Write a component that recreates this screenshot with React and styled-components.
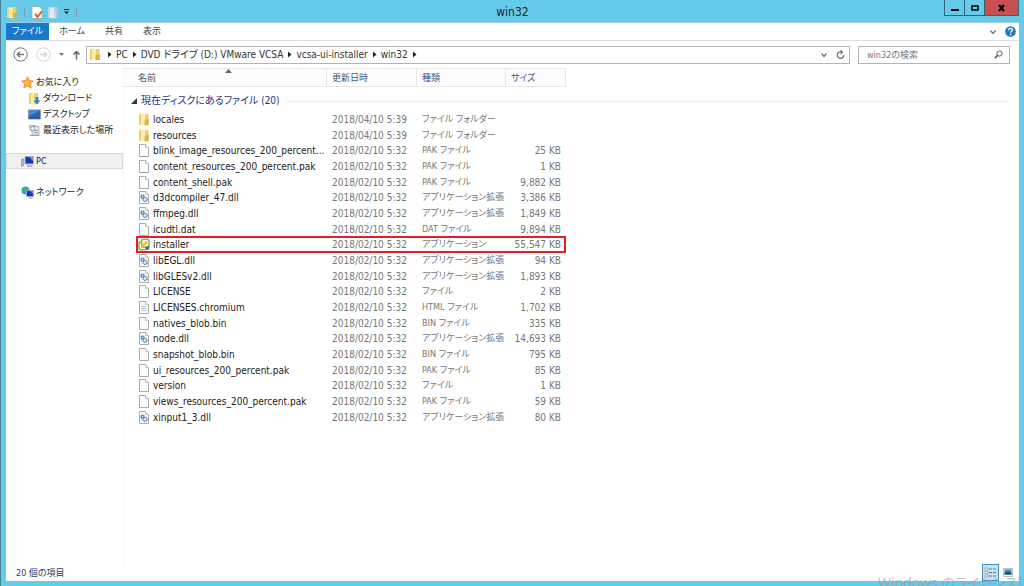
import React from "react";
import styled, { createGlobalStyle } from "styled-components";

const GlobalStyle = createGlobalStyle`
    * { box-sizing: border-box; }
    body {
        margin: 0;
        background: #66cbea;
        color: #222;
        font-family: "DejaVu Sans Condensed", "Noto Sans", "Noto Sans CJK JP", sans-serif;
        font-size: 9px;
        line-height: 16px;
        font-feature-settings: "palt";
    }
    button, input {
        font: inherit;
        font-feature-settings: inherit;
        color: inherit;
        margin: 0;
        padding: 0;
        border: 0;
        background: none;
    }
    button { display: flex; align-items: center; justify-content: center; }
    a { color: inherit; text-decoration: none; }
    svg { display: block; flex: none; }
`;

const Window = styled.div`
    height: 100vh;
    display: flex;
    flex-direction: column;
    padding: 0 5px 5px;
    border-left: 1px solid #4d7f91;
    background: #66cbea;
    overflow: hidden;
    position: relative;
`;

const TitleBar = styled.header`
    height: 22px;
    display: grid;
    grid-template-columns: 1fr auto 1fr;
    flex: none;
`;

const Title = styled.h1`
    margin: 0;
    font-size: 12px;
    font-weight: 400;
    line-height: 24px;
`;

const QuickAccess = styled.div`
    display: flex;
    align-items: center;
    gap: 4px;
`;

const Divider = styled.span`
    width: 1px;
    height: 9px;
    margin: 0 2px;
    background: #8796a0;
`;

const WindowButtons = styled.div`
    display: flex;
    justify-self: end;
    height: 16px;
`;

const WindowButton = styled.button`
    width: ${props => props.$close ? "35px" : "21px"};
    border: 1px solid #2f6478;
    border-top: 0;
    margin-left: -1px;
    background: ${props => props.$close ? "#c75050" : "none"};
`;

const Client = styled.div`
    flex: 1;
    min-height: 0;
    display: flex;
    flex-direction: column;
    background: #fff;
    border-top: 1px solid #a3cfdf;
`;

const Ribbon = styled.nav`
    height: 18px;
    display: flex;
    flex: none;
    align-items: stretch;
    border-bottom: 1px solid #dcdddf;
`;

const Tab = styled.a`
    padding: 0 ${props => props.$active ? "6px" : "10px"};
    line-height: 17px;
    color: ${props => props.$active ? "#fff" : "#444"};
    background: ${props => props.$active ? "#1979ca" : "none"};
`;

const RibbonEnd = styled.div`
    margin-left: auto;
    padding-right: 3px;
    display: flex;
    align-items: center;
    gap: 8px;
`;

const AddressBar = styled.div`
    height: 27px;
    padding: 0 9px 0 7px;
    display: flex;
    flex: none;
    align-items: center;
`;

const NavButtons = styled.div`
    width: 73px;
    display: flex;
    align-items: center;
    gap: 8px;
`;

const Path = styled.div`
    flex: 1;
    height: 18px;
    padding: 0 4px 0 2px;
    display: flex;
    align-items: center;
    gap: 4px;
    border: 1px solid #b4b4b4;
    color: #333;
    font-size: 10px;

    > svg:first-child { margin-right: 2px; }
`;

const PathEnd = styled.div`
    margin-left: auto;
    display: flex;
    gap: 8px;
`;

const Search = styled.label`
    width: 152px;
    height: 18px;
    margin-left: 8px;
    padding: 0 6px 0 8px;
    display: flex;
    align-items: center;
    border: 1px solid #b4b4b4;

    input {
        flex: 1;
        min-width: 0;
        outline: none;
    }
    input::placeholder { color: #777; opacity: 1; }
`;

const Body = styled.div`
    flex: 1;
    min-height: 0;
    display: flex;
`;

const Sidebar = styled.aside`
    width: 118px;
    padding-top: 6px;
    flex: none;
    border-right: 1px solid #f4f5f7;
`;

const SideGroup = styled.div`
    margin-bottom: 15px;
`;

const SideItem = styled.a`
    height: 16px;
    padding-left: ${props => props.$child ? "21px" : "14px"};
    display: flex;
    align-items: center;
    gap: 2px;
    white-space: nowrap;
    border: 1px solid ${props => props.$selected ? "#d9d9d9" : "transparent"};
    background: ${props => props.$selected ? "#f0f0f0" : "none"};
`;

const Main = styled.main`
    flex: 1;
    min-width: 0;
    padding-right: 6px;
`;

const FileTable = styled.table`
    width: 100%;
    table-layout: fixed;
    border-collapse: separate;
    border-spacing: 0;

    th, td { padding: 0 5px; white-space: nowrap; }
`;

const HeadCell = styled.th`
    height: 19px;
    position: relative;
    text-align: left;
    font-weight: 400;
    color: #44597a;
    background: #fcfcfc;
    border: solid #e8e8e8;
    border-width: 1px 1px 1px 0;

    &&:first-child { padding-left: 14px; }
    svg { position: absolute; top: 0; left: 50%; }
`;

const GroupCell = styled.td`
    height: 24px;

    div {
        padding-top: 4px;
        display: flex;
        align-items: center;
        gap: 4px;
        font-size: 10px;
        color: #1e3287;
    }
    && { padding-left: 7px; }
    div::after {
        content: "";
        flex: 1;
        height: 1px;
        margin-left: 2px;
        background: #e6eef7;
    }
`;

const FileRow = styled.tr`
    height: 16px;
    line-height: 15px;
    &:nth-child(3n) { height: 15px; }

    td { color: #777; font-size: 10px; }
    td:first-child {
        padding: 0 5px 0 14px;
        color: #222;
        position: relative;
    }
    td:nth-child(3) { font-size: 9px; }
    td:nth-child(4) { text-align: right; }
`;

const FileName = styled.span`
    display: flex;
    align-items: center;
    gap: 3px;
`;

const Highlight = styled.i`
    position: absolute;
    top: -1px;
    left: 12px;
    width: 430px;
    height: 17px;
    border: 2px solid #ec1c24;
    pointer-events: none;
`;

const StatusBar = styled.footer`
    height: 17px;
    padding: 0 3px 0 10px;
    display: flex;
    flex: none;
    align-items: center;
    color: #2b3f66;
`;

const ViewButtons = styled.div`
    margin-left: auto;
    display: flex;
`;

const ViewButton = styled.button`
    width: 17px;
    height: 17px;
    border: 1px solid ${props => props.$active ? "#4a90b8" : "transparent"};
    background: ${props => props.$active ? "#c3e3f3" : "none"};
`;

const Watermark = styled.div`
    position: absolute;
    right: 0;
    bottom: -8px;
    width: 146px;
    overflow: hidden;
    font-family: "Noto Sans", "Noto Sans CJK JP", sans-serif;
    font-size: 14px;
    line-height: 22px;
    white-space: nowrap;
    color: rgba(150, 150, 150, 0.6);
    pointer-events: none;
`;

const FolderIcon = ({ faded }) => (
    <svg width="12" height="13" viewBox="0 0 12 13">
        <path d="M1 1.5 4.500.5v11.500L1 12Z" fill={faded ? "#c5d3e6" : "#ecd06c"} />
        <path d="M3 1.5h4v11L3 12Z" fill={faded ? "#e3ebf5" : "#fbedac"} />
        <path d="M7 1h3.500v11L7 12.5Z" fill={faded ? "#bccbe0" : "#ecd06c"} />
        <path d="M6.500 7h3v5h-3Z" fill={faded ? "#cfdcec" : "#dcb648"} />
        <path d="M10 6v6" stroke={faded ? "#a5b7cf" : "#c49b30"} />
    </svg>
);

const FileIcon = ({ kind }) => (
    <svg width="12" height="13" viewBox="0 0 12 13">
        <path d="M1.500.5h6l3 3v9h-9Z" fill="#fbfbfb" stroke="#a3a3a3" strokeWidth=".9" />
        <path d="M7.500.5v3h3" fill="#eee" stroke="#b5b5b5" strokeWidth=".7" />
        {kind === "dll" && (
            <g fill="#e4eff8" stroke="#5f8fbb" strokeWidth="1.4">
                <circle cx="4.600" cy="5.800" r="1.500" />
                <circle cx="7" cy="8.400" r="2" strokeDasharray="1.600 .500" />
            </g>
        )}
        {kind === "html" && <path d="M3.500 5.500h4M3.500 7.500h5M3.500 9.500h5" stroke="#aaa" strokeWidth=".8" />}
    </svg>
);

const InstallerIcon = () => (
    <svg width="12" height="13" viewBox="0 0 12 13">
        <rect x=".8" y="3.800" width="8" height="8" rx="2.500" fill="#fff" stroke="#7cc04c" strokeWidth="1.500" />
        <rect x="3.400" y="1.200" width="7.800" height="8" rx="2.500" fill="#fff" stroke="#7cc04c" strokeWidth="1.500" />
        <path d="M3.500 4.500h3v-1.500h3v4H7v2H3.500Z" fill="#f6c445" />
        <circle cx="9.500" cy="10" r="2" fill="#2e6fa7" />
    </svg>
);

const GlyphIcon = {
    star: (
        <svg width="13" height="13" viewBox="0 0 13 13">
            <path d="m6.500.8 1.700 3.700 4.100.5-3 2.800.8 4.200-3.600-2.100L2.900 12l.8-4.200-3-2.800 4.100-.5Z" fill="#fdb53c" stroke="#e5842a" strokeWidth=".8" />
        </svg>
    ),
    download: (
        <svg width="13" height="13" viewBox="0 0 13 13">
            <path d="M1 1.500 5 .5v11L1 12Z" fill="#ecd06c" />
            <path d="M3 1.500h3v11L3 12Z" fill="#fbedac" />
            <path d="M6 1h4v11L6 12.500Z" fill="#ecd06c" />
            <path d="M7.500 5h3v3.500h2L9 12.500 5.500 8.500h2Z" fill="#2e86d0" />
        </svg>
    ),
    desktop: (
        <svg width="13" height="13" viewBox="0 0 13 13">
            <path d="M.5 2h12v9H.5Z" fill="#2b62b4" stroke="#8796ad" />
            <path d="M1 2.500h11L1 8Z" fill="#4b8ad8" />
            <path d="M1 10h11" stroke="#284a75" />
        </svg>
    ),
    recent: (
        <svg width="13" height="13" viewBox="0 0 13 13">
            <path d="M1 1.500h7v5H2.500Z" fill="#c9d1d8" stroke="#9aa5ae" strokeWidth=".7" />
            <path d="M4 2.500h7v8.500H4Z" fill="#dfe4e8" stroke="#98a3ac" strokeWidth=".7" />
            <circle cx="4.500" cy="4.500" r="2" fill="#eef3f7" stroke="#8296a7" strokeWidth=".7" />
            <path d="M6 6.500h4M6 8.500h4M2 11.500h9.500" stroke="#8fa3b4" />
        </svg>
    ),
    pc: (
        <svg width="13" height="13" viewBox="0 0 13 13">
            <path d="M.5 4h2v7h-2Z" fill="#b9c0c6" stroke="#7d868d" strokeWidth=".6" />
            <path d="M4 1.500h8.500V9H4Z" fill="#1834bd" stroke="#a8b2bf" />
            <path d="M8 2h4v4Z" fill="#6f94ee" />
            <path d="M6 10.500h5v1.500H6Z" fill="#9ba5ad" />
        </svg>
    ),
    network: (
        <svg width="13" height="13" viewBox="0 0 13 13">
            <circle cx="4.500" cy="4.500" r="4" fill="#2fa5d6" />
            <path d="M1.500 2.500 5 1l1 2-3 2.500Z" fill="#48b749" />
            <path d="M5.500 4.500h7v6h-7Z" fill="#1834bd" stroke="#a8b2bf" strokeWidth=".8" />
            <path d="M9 5h3v3Z" fill="#6f94ee" />
            <path d="M7.500 11.500h4v1h-4Z" fill="#8a949c" />
        </svg>
    ),
};

const Triangle = ({ down, color = "#222" }) => (
    <svg width="5" height="7" viewBox="0 0 5 7">
        <path d={down ? "M0 2h5L2.500 5Z" : "M1 0.500 4.500 3.500 1 6.500Z"} fill={color} />
    </svg>
);

const Chevron = () => (
    <svg width="8" height="8" viewBox="0 0 8 8">
        <path d="m1.500 2.500 2.500 3 2.500-3" fill="none" stroke="#777" strokeWidth="1.400" />
    </svg>
);

const ArrowCircle = ({ forward }) => (
    <svg width="15" height="15" viewBox="0 0 15 15" fill="none" stroke={forward ? "#d2d2d2" : "#777"}>
        <circle cx="7.500" cy="7.500" r="6.700" />
        <path d={forward ? "M4 7.500h6.500M8 4.800l2.700 2.700L8 10.200" : "M11 7.500H4.500M7 4.800 4.300 7.500 7 10.200"} strokeWidth="1.500" />
    </svg>
);

const tabs = ["ホーム", "共有", "表示"];
const crumbs = ["PC", "DVD ドライブ (D:) VMware VCSA", "vcsa-ui-installer", "win32"];

const files = [
    ["locales", "2018/04/10 5:39", "ファイル フォルダー", "", "folder"],
    ["resources", "2018/04/10 5:39", "ファイル フォルダー", "", "folder"],
    ["blink_image_resources_200_percent...", "2018/02/10 5:32", "PAK ファイル", "25 KB"],
    ["content_resources_200_percent.pak", "2018/02/10 5:32", "PAK ファイル", "1 KB"],
    ["content_shell.pak", "2018/02/10 5:32", "PAK ファイル", "9,882 KB"],
    ["d3dcompiler_47.dll", "2018/02/10 5:32", "アプリケーション拡張", "3,386 KB", "dll"],
    ["ffmpeg.dll", "2018/02/10 5:32", "アプリケーション拡張", "1,849 KB", "dll"],
    ["icudtl.dat", "2018/02/10 5:32", "DAT ファイル", "9,894 KB"],
    ["installer", "2018/02/10 5:32", "アプリケーション", "55,547 KB", "installer"],
    ["libEGL.dll", "2018/02/10 5:32", "アプリケーション拡張", "94 KB", "dll"],
    ["libGLESv2.dll", "2018/02/10 5:32", "アプリケーション拡張", "1,893 KB", "dll"],
    ["LICENSE", "2018/02/10 5:32", "ファイル", "2 KB"],
    ["LICENSES.chromium", "2018/02/10 5:32", "HTML ファイル", "1,702 KB", "html"],
    ["natives_blob.bin", "2018/02/10 5:32", "BIN ファイル", "335 KB"],
    ["node.dll", "2018/02/10 5:32", "アプリケーション拡張", "14,693 KB", "dll"],
    ["snapshot_blob.bin", "2018/02/10 5:32", "BIN ファイル", "795 KB"],
    ["ui_resources_200_percent.pak", "2018/02/10 5:32", "PAK ファイル", "85 KB"],
    ["version", "2018/02/10 5:32", "ファイル", "1 KB"],
    ["views_resources_200_percent.pak", "2018/02/10 5:32", "PAK ファイル", "59 KB"],
    ["xinput1_3.dll", "2018/02/10 5:32", "アプリケーション拡張", "80 KB", "dll"],
];

const iconFor = (kind) => {
    if (kind === "folder") return <FolderIcon />;
    if (kind === "installer") return <InstallerIcon />;
    return <FileIcon kind={kind} />;
};

const App = () => (
    <Window>
        <GlobalStyle />
        <TitleBar>
            <QuickAccess>
                <FolderIcon />
                <Divider />
                <button aria-label="プロパティ">
                    <svg width="12" height="13" viewBox="0 0 12 13">
                        <path d="M1 .5h7l3 3v9H1Z" fill="#fff" stroke="#9aa" strokeWidth=".8" />
                        <path d="m4 8 2.500 3L11 5" fill="none" stroke="#e2622f" strokeWidth="2" />
                    </svg>
                </button>
                <button aria-label="新しいフォルダー"><FolderIcon faded /></button>
                <button aria-label="カスタマイズ">
                    <svg width="7" height="6" viewBox="0 0 7 6"><path d="M1 0h5v1H1ZM1 2.500h5L3.500 5Z" fill="#222" /></svg>
                </button>
                <Divider />
            </QuickAccess>
            <Title>win32</Title>
            <WindowButtons>
                <WindowButton aria-label="最小化">
                    <svg width="8" height="8"><path d="M0 5h8v2H0Z" /></svg>
                </WindowButton>
                <WindowButton aria-label="最大化">
                    <svg width="8" height="8"><path d="M1 2h6v4H1Z" fill="none" stroke="#000" strokeWidth="1.500" /></svg>
                </WindowButton>
                <WindowButton $close aria-label="閉じる">
                    <svg width="8" height="8"><path d="m1 1 5 6M6 1 1 7" stroke="#000" strokeWidth="2" /></svg>
                </WindowButton>
            </WindowButtons>
        </TitleBar>

        <Client>
            <Ribbon>
                <Tab href="#" $active>ファイル</Tab>
                {tabs.map(tab => <Tab key={tab} href="#">{tab}</Tab>)}
                <RibbonEnd>
                    <button aria-label="リボンの展開"><Chevron /></button>
                    <button aria-label="ヘルプ">
                        <svg width="11" height="11" viewBox="0 0 11 11">
                            <circle cx="5.500" cy="5.500" r="5.300" fill="#1979ca" />
                            <path d="M3.700 4.200c0-2.600 3.700-2.400 3.700-.2 0 1.400-1.800 1.300-1.800 2.800M5.600 7.800v1.400" fill="none" stroke="#fff" strokeWidth="1.300" />
                        </svg>
                    </button>
                </RibbonEnd>
            </Ribbon>

            <AddressBar>
                <NavButtons>
                    <button aria-label="戻る"><ArrowCircle /></button>
                    <button aria-label="進む"><ArrowCircle forward /></button>
                    <button aria-label="履歴"><Triangle down color="#777" /></button>
                    <button aria-label="上へ">
                        <svg width="9" height="10" viewBox="0 0 9 10"><path d="M4.500 9.500V2M1.500 4.500l3-3 3 3" fill="none" stroke="#666" strokeWidth="1.500" /></svg>
                    </button>
                </NavButtons>
                <Path>
                    <FolderIcon />
                    <Triangle />
                    {crumbs.map(crumb => (
                        <React.Fragment key={crumb}>
                            <a href="#">{crumb}</a>
                            <Triangle />
                        </React.Fragment>
                    ))}
                    <PathEnd>
                        <button aria-label="以前の場所"><Chevron /></button>
                        <button aria-label="更新">
                            <svg width="9" height="10" viewBox="0 0 9 10"><path d="M6 2.100A3.300 3.300 0 1 0 7.800 5M4.500.5l2 1.800-2 1.800" fill="none" stroke="#666" strokeWidth="1.200" /></svg>
                        </button>
                    </PathEnd>
                </Path>
                <Search>
                    <input type="text" placeholder="win32の検索" aria-label="win32の検索" />
                    <svg width="9" height="9" viewBox="0 0 9 9" fill="none" stroke="#555"><circle cx="5.500" cy="3.500" r="2.600" /><path d="M3.600 5.400.8 8.200" strokeWidth="1.500" /></svg>
                </Search>
            </AddressBar>

            <Body>
                <Sidebar>
                    <SideGroup>
                        <SideItem href="#">{GlyphIcon.star}お気に入り</SideItem>
                        <SideItem href="#" $child>{GlyphIcon.download}ダウンロード</SideItem>
                        <SideItem href="#" $child>{GlyphIcon.desktop}デスクトップ</SideItem>
                        <SideItem href="#" $child>{GlyphIcon.recent}最近表示した場所</SideItem>
                    </SideGroup>
                    <SideGroup>
                        <SideItem href="#" $selected>{GlyphIcon.pc}PC</SideItem>
                    </SideGroup>
                    <SideGroup>
                        <SideItem href="#">{GlyphIcon.network}ネットワーク</SideItem>
                    </SideGroup>
                </Sidebar>

                <Main>
                    <FileTable>
                        <colgroup>
                            <col style={{ width: 203 }} />
                            <col style={{ width: 90 }} />
                            <col style={{ width: 89 }} />
                            <col style={{ width: 60 }} />
                            <col />
                        </colgroup>
                        <thead>
                            <tr>
                                <HeadCell>
                                    名前
                                    <svg width="7" height="4" viewBox="0 0 7 4"><path d="M0 4h7L3.500 0Z" fill="#5a6a7d" /></svg>
                                </HeadCell>
                                <HeadCell>更新日時</HeadCell>
                                <HeadCell>種類</HeadCell>
                                <HeadCell>サイズ</HeadCell>
                                <td />
                            </tr>
                        </thead>
                        <tbody>
                            <tr>
                                <GroupCell colSpan="5">
                                    <div>
                                        <svg width="6" height="6" viewBox="0 0 6 6"><path d="M6 0v6H0Z" fill="#333" /></svg>
                                        現在ディスクにあるファイル (20)
                                    </div>
                                </GroupCell>
                            </tr>
                        </tbody>
                        <tbody>
                            {files.map(([name, date, type, size, kind]) => (
                                <FileRow key={name}>
                                    <td>
                                        <FileName>{iconFor(kind)}{name}</FileName>
                                        {kind === "installer" && <Highlight />}
                                    </td>
                                    <td>{date}</td>
                                    <td>{type}</td>
                                    <td>{size}</td>
                                    <td />
                                </FileRow>
                            ))}
                        </tbody>
                    </FileTable>
                </Main>
            </Body>

            <StatusBar>
                20 個の項目
                <ViewButtons>
                    <ViewButton $active aria-label="詳細">
                        <svg width="13" height="13" viewBox="0 0 13 13"><path d="M1 2h3v2H1ZM1 5.500h3v2H1ZM1 9h3v2H1Z" fill="#fff" stroke="#8b7f86" strokeWidth=".6" /><path d="M5 3h3M9 3h3M5 6.500h3M9 6.500h3M5 10h3M9 10h3" stroke="#667f92" /></svg>
                    </ViewButton>
                    <ViewButton aria-label="大アイコン">
                        <svg width="10" height="9" viewBox="0 0 10 9"><path d="M.5.500h9v8h-9Z" fill="#fff" stroke="#b3bcc5" /><path d="M1.500 1.500h7v5h-7Z" fill="#3b86cb" /><path d="M1.500 5q3-2 7 0v1.500h-7Z" fill="#1d4b52" /></svg>
                    </ViewButton>
                </ViewButtons>
            </StatusBar>
        </Client>
        <Watermark>Windows のライセンス認証</Watermark>
    </Window>
);

export default App;
